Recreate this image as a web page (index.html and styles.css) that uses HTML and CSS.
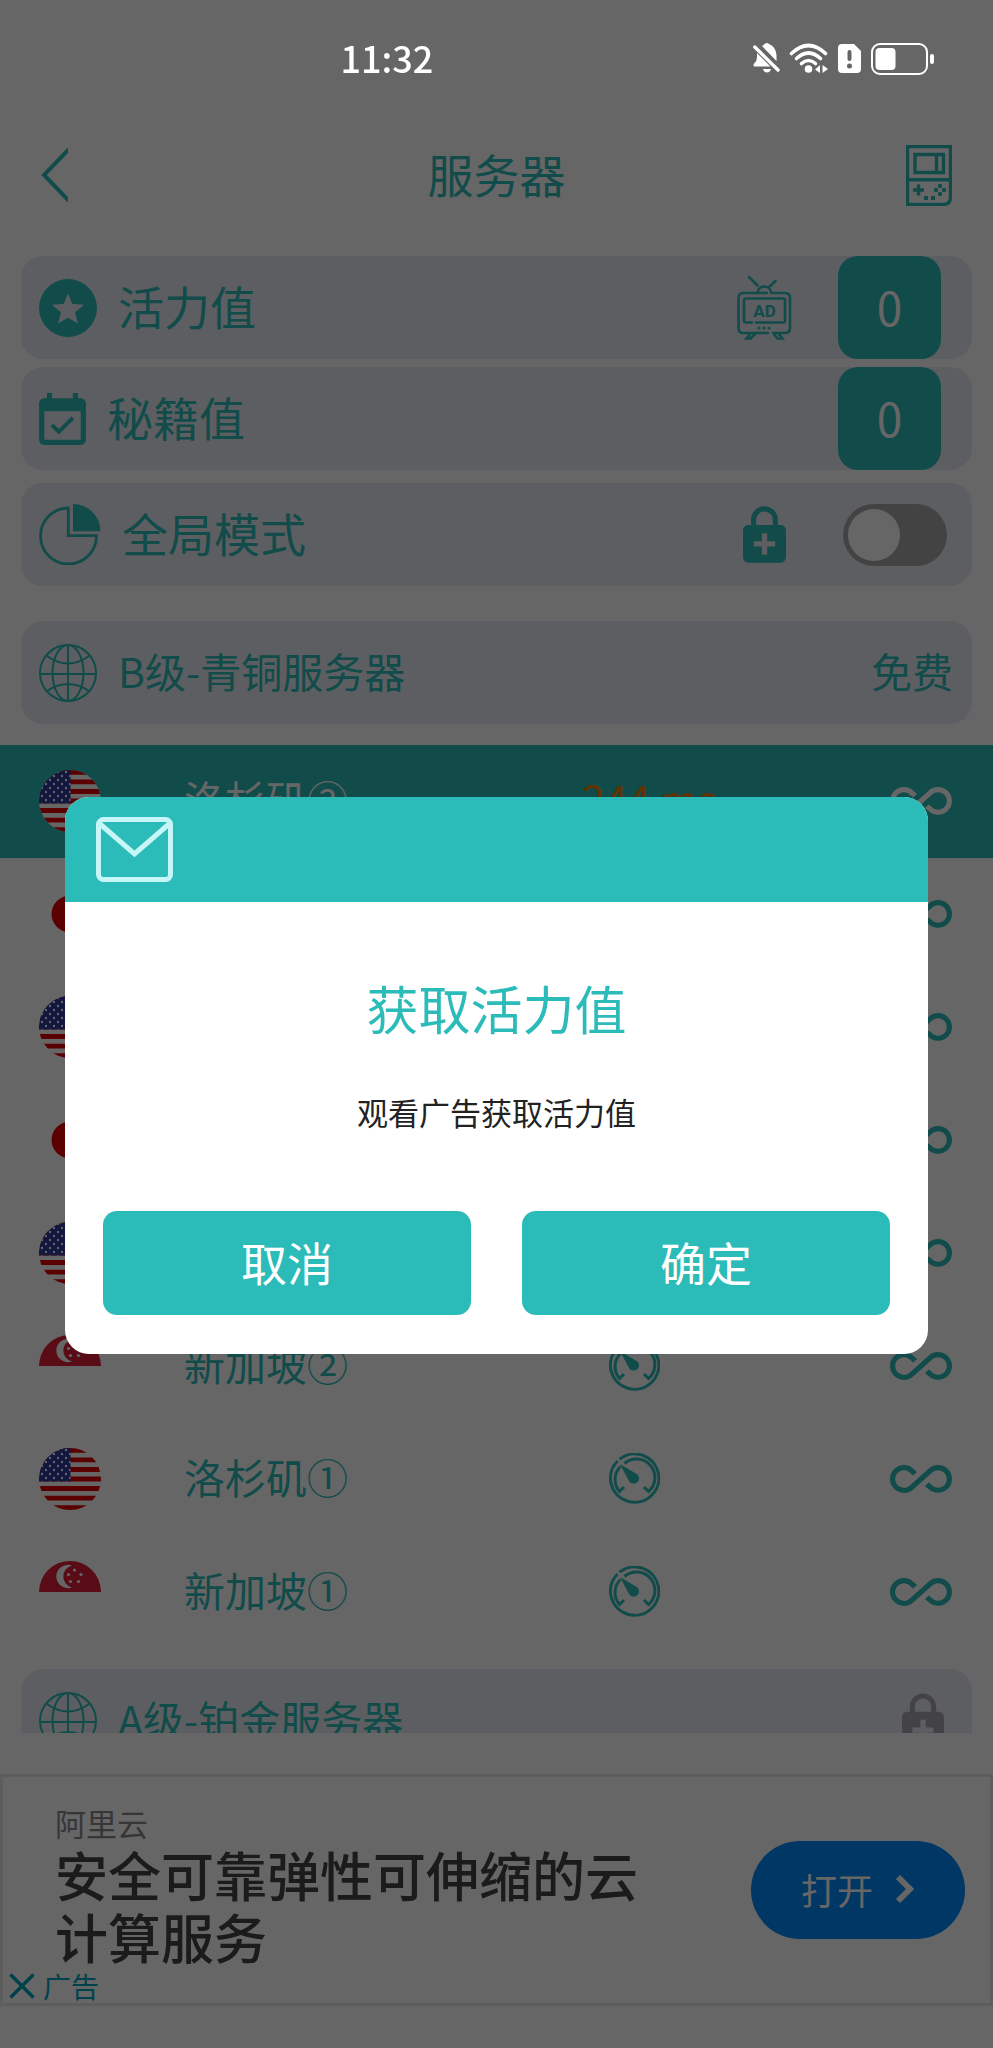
FILE: index.html
```html
<!DOCTYPE html>
<html lang="zh-CN">
<head>
<meta charset="utf-8">
<meta name="viewport" content="width=device-width, initial-scale=1">
<title>服务器</title>
<link rel="stylesheet" href="styles.css">
</head>
<body>
<svg class="sprite" aria-hidden="true">
  <defs>
    <clipPath id="disc"><circle cx="31" cy="31" r="31"/></clipPath>
    <pattern id="stars" width="8" height="8" patternUnits="userSpaceOnUse">
      <circle cx="3" cy="2" r="1.200" fill="#fff"/><circle cx="7" cy="6" r="1.200" fill="#fff"/>
    </pattern>
  </defs>
  <symbol id="flag-us" viewBox="0 0 62 62">
    <g clip-path="url(#disc)">
      <rect width="62" height="62" fill="#fff"/>
      <path d="M0 2.4H62M0 11.9H62M0 21.5H62M0 31H62M0 40.5H62M0 50.1H62M0 59.6H62" stroke="#e30000" stroke-width="4.8"/>
      <rect width="31.5" height="33.4" fill="#2b3a9b"/>
      <rect width="31.5" height="33.4" fill="url(#stars)"/>
    </g>
  </symbol>
  <symbol id="flag-jp" viewBox="0 0 62 62">
    <circle cx="31" cy="31" r="31" fill="#fff"/><circle cx="31" cy="31" r="18.5" fill="#e30000"/>
  </symbol>
  <symbol id="flag-sg" viewBox="0 0 62 62">
    <circle cx="31" cy="31" r="31" fill="#fff"/>
    <path d="M0 31A31 31 0 0 1 62 31Z" fill="#e02038"/>
    <path d="M33 4.500A11.700 11.700 0 1 0 33 26.500A11.300 11.300 0 0 1 33 4.500Z" fill="#fff"/>
    <g fill="#fff"><circle cx="35.500" cy="9" r="1.600"/><circle cx="29.500" cy="13.500" r="1.600"/><circle cx="42" cy="13.500" r="1.600"/><circle cx="31.500" cy="20.500" r="1.600"/><circle cx="39.500" cy="20.500" r="1.600"/></g>
  </symbol>
  <symbol id="gauge" viewBox="0 0 52 52">
    <g fill="none" stroke="currentColor" stroke-width="3">
      <path d="M9.500 8A24.200 24.200 0 1 0 11.500 6.200"/>
      <path d="M16 34L11.500 38.500A18.300 18.300 0 0 1 12.500 13.500M16.500 10.500A18.300 18.300 0 0 1 40.500 38.500L36 34"/>
    </g>
    <path d="M12 11L29.500 21.500A5.400 5.400 0 1 1 21 28Z" fill="currentColor"/>
  </symbol>
  <symbol id="infinity" viewBox="0 6.6 24 10.8">
    <path fill="currentColor" d="M18.6 6.62c-1.44 0-2.8.56-3.77 1.53L12 10.66 10.48 12h.01L7.8 14.39c-.64.64-1.49.99-2.4.99-1.87 0-3.39-1.51-3.39-3.38S3.53 8.620 5.400 8.620c.91 0 1.760.35 2.440 1.030l1.130 1 1.510-1.340L9.220 8.200C8.200 7.180 6.840 6.620 5.400 6.620 2.420 6.620 0 9.040 0 12s2.420 5.380 5.400 5.380c1.440 0 2.800-.56 3.770-1.530l2.830-2.500.01.01L13.520 12h-.01l2.690-2.390c.64-.64 1.490-.99 2.400-.99 1.870 0 3.390 1.510 3.390 3.380s-1.520 3.380-3.390 3.380c-.9 0-1.760-.35-2.440-1.030l-1.140-1.010-1.510 1.340 1.270 1.120c1.020 1.010 2.370 1.570 3.820 1.570 2.980 0 5.400-2.410 5.400-5.380s-2.420-5.370-5.400-5.370z"/>
  </symbol>
  <symbol id="lock" viewBox="4 1 16 21">
    <path fill="currentColor" d="M18 8h-1V6c0-2.760-2.240-5-5-5S7 3.240 7 6v2H6c-1.100 0-2 .9-2 2v10c0 1.100.9 2 2 2h12c1.100 0 2-.9 2-2V10c0-1.100-.9-2-2-2zM8.900 6c0-1.710 1.390-3.100 3.100-3.100s3.100 1.390 3.100 3.100v2H8.900V6zM16 16h-3v3h-2v-3H8v-2h3v-3h2v3h3v2z"/>
  </symbol>
  <symbol id="globe" viewBox="0 0 58 58">
    <g fill="none" stroke="currentColor" stroke-width="2">
      <circle cx="29" cy="29" r="28"/><ellipse cx="29" cy="29" rx="15.500" ry="28"/>
      <path d="M29 1V57M1 30H57M8 12Q29 27 50 12M8 47Q29 33 50 47"/>
    </g>
  </symbol>
</svg>

<div class="screen">
  <div class="status">
    <span class="status-time">11:32</span>
    <div class="status-icons">
      <svg width="27" height="32" viewBox="0 0 27 32" fill="#fff">
        <path d="M9 3Q11 2 11.500 1Q14-1 16 1Q23 4 23.500 12V18Z"/>
        <path d="M4 10L17.500 23.500H1.500Q-.5 22.500 1.500 20Q4 18 4 14Z"/>
        <path d="M10 26H18Q17 29.500 14 29.500Q11 29.500 10 26Z"/>
        <path d="M1.800 4L25 27" stroke="#fff" stroke-width="3.400" stroke-linecap="round"/>
      </svg>
      <svg width="40" height="32" viewBox="0 0 40 32">
        <g fill="none" stroke="#fff" stroke-width="3.600" stroke-linecap="round">
          <path d="M2.500 10.500Q19.500-5.500 36.500 10.500"/><path d="M7.500 15.500Q19.500 4.500 31.500 15.500"/><path d="M12.500 20.500Q19.500 14.500 26.500 20.500"/>
        </g>
        <circle cx="19.500" cy="26" r="3.800" fill="#fff"/>
        <path d="M31 22V30L26 26.500ZM33.500 22V30L39 26Z" fill="#fff"/>
      </svg>
      <svg width="24" height="32" viewBox="0 0 24 32">
        <path fill="#fff" fill-rule="evenodd" d="M4 1H16L23 8V26Q23 30 19 30H4Q0 30 0 26V5Q0 1 4 1ZM11.500 7Q9.500 7 9.500 9V16Q9.500 18 11.500 18T13.500 16V9Q13.500 7 11.500 7ZM11.500 20.500A2.500 2.500 0 1 0 11.500 25.500A2.500 2.500 0 1 0 11.500 20.500Z"/>
      </svg>
      <svg width="64" height="34" viewBox="0 0 64 34">
        <rect x="1" y="2" width="55" height="30" rx="8" fill="none" stroke="#fff" stroke-width="2"/>
        <rect x="4.500" y="6" width="20" height="22" rx="4" fill="#fff"/>
        <rect x="59" y="12" width="4" height="10" rx="2" fill="#fff"/>
      </svg>
    </div>
  </div>

  <header class="topbar">
    <button class="icon-btn" type="button" aria-label="返回">
      <svg width="27" height="54" viewBox="0 0 27 54"><path d="M30-1L3 27L30 55" fill="none" stroke="currentColor" stroke-width="4"/></svg>
    </button>
    <h1 class="title">服务器</h1>
    <button class="icon-btn" type="button" aria-label="游戏">
      <svg width="46" height="61" viewBox="0 0 46 61">
        <g fill="none" stroke="currentColor" stroke-width="3.400">
          <path d="M1.500 1.500H44.500V52Q44.500 59.500 37 59.500H1.500ZM0 34.700H46"/>
          <path d="M9 9.500H37.500V27.500H9ZM30.500 9.500V27.500"/>
          <path d="M12.500 39.500V50.500M7 45H18"/>
        </g>
        <g fill="currentColor"><rect x="18" y="51" width="4" height="4"/><rect x="25" y="51" width="4" height="4"/><circle cx="34" cy="41" r="2.200"/><circle cx="34" cy="49" r="2.200"/><circle cx="30" cy="45" r="2.200"/><circle cx="38" cy="45" r="2.200"/></g>
      </svg>
    </button>
  </header>

  <section class="stats">
    <div class="card">
      <svg width="58" height="58" viewBox="0 0 58 58"><path fill="currentColor" fill-rule="evenodd" d="M29 0A29 29 0 1 0 29 58A29 29 0 1 0 29 0ZM29 14.500L33.300 25L45 25.800L36 33.500L39 44.500L29 38.700L19 44.500L22 33.500L13 25.800L24.700 25Z"/></svg>
      <span class="card-label">活力值</span>
      <button class="icon-btn" type="button" aria-label="观看广告">
        <svg width="55" height="66" viewBox="0 0 55 66">
          <g fill="none" stroke="currentColor" stroke-width="2.600" stroke-linecap="round">
            <path d="M30 18H6Q1.500 18 1.500 23V53Q1.500 58 6 58H31M36 58H48Q53 58 53 53V23Q53 18 48 18H34.500Q33 11.500 27.500 11.500T20.500 17"/>
            <path d="M15 47.500H9Q7 47.500 7 45.500V25.500Q7 23.500 9 23.500H46Q48 23.500 48 25.500V45.500Q48 47.500 46 47.500H19"/>
            <path d="M12 2L20.500 10.500M38.500 6L32.500 11.500M13 59L9.500 63.500H13.500L18 59M37 59L40.500 63.500H45.500L42 59"/>
          </g>
          <g fill="currentColor"><circle cx="22" cy="53" r="1.600"/><circle cx="27" cy="53" r="1.600"/><circle cx="32" cy="53" r="1.600"/></g>
          <text class="tv-text" x="27.500" y="41.500" text-anchor="middle">AD</text>
        </svg>
      </button>
      <button class="score" type="button">0</button>
    </div>
    <div class="card">
      <svg width="47" height="52" viewBox="3 1 18 20"><path fill="currentColor" d="M16.530 11.060L15.470 10l-4.880 4.880-2.120-2.120-1.060 1.060L10.590 17l5.940-5.940zM19 3h-1V1h-2v2H8V1H6v2H5c-1.110 0-1.990.9-1.990 2L3 19c0 1.100.89 2 2 2h14c1.100 0 2-.9 2-2V5c0-1.100-.9-2-2-2zm0 16H5V8h14v11z"/></svg>
      <span class="card-label">秘籍值</span>
      <button class="score" type="button">0</button>
    </div>
    <div class="card card-mode">
      <svg width="62" height="61" viewBox="0 0 62 61">
        <path d="M29.300 4A28 28 0 1 0 57.500 31.700H29.300Z" fill="none" stroke="currentColor" stroke-width="2.800"/>
        <path d="M34 0A27.500 27.500 0 0 1 61.500 27.300H34Z" fill="currentColor"/>
      </svg>
      <label class="card-label" for="global-mode">全局模式</label>
      <svg class="mode-lock" width="43" height="57"><use href="#lock"/></svg>
      <input class="switch" type="checkbox" id="global-mode">
    </div>
  </section>

  <main class="servers">
    <div class="card group">
      <svg width="58" height="58"><use href="#globe"/></svg>
      <h2 class="card-label">B级-青铜服务器</h2>
      <span class="price">免费</span>
    </div>
    <ul class="rows">
      <li class="row selected"><svg class="flag"><use href="#flag-us"/></svg><span class="name">洛杉矶②</span><span class="ping">244 ms</span><svg class="quota"><use href="#infinity"/></svg></li>
      <li class="row"><svg class="flag"><use href="#flag-jp"/></svg><span></span><button class="icon-btn" type="button" aria-label="测速"><svg class="gauge"><use href="#gauge"/></svg></button><svg class="quota"><use href="#infinity"/></svg></li>
      <li class="row"><svg class="flag"><use href="#flag-us"/></svg><span></span><button class="icon-btn" type="button" aria-label="测速"><svg class="gauge"><use href="#gauge"/></svg></button><svg class="quota"><use href="#infinity"/></svg></li>
      <li class="row"><svg class="flag"><use href="#flag-jp"/></svg><span></span><button class="icon-btn" type="button" aria-label="测速"><svg class="gauge"><use href="#gauge"/></svg></button><svg class="quota"><use href="#infinity"/></svg></li>
      <li class="row"><svg class="flag"><use href="#flag-us"/></svg><span></span><button class="icon-btn" type="button" aria-label="测速"><svg class="gauge"><use href="#gauge"/></svg></button><svg class="quota"><use href="#infinity"/></svg></li>
      <li class="row"><svg class="flag"><use href="#flag-sg"/></svg><span class="name">新加坡②</span><button class="icon-btn" type="button" aria-label="测速"><svg class="gauge"><use href="#gauge"/></svg></button><svg class="quota"><use href="#infinity"/></svg></li>
      <li class="row"><svg class="flag"><use href="#flag-us"/></svg><span class="name">洛杉矶①</span><button class="icon-btn" type="button" aria-label="测速"><svg class="gauge"><use href="#gauge"/></svg></button><svg class="quota"><use href="#infinity"/></svg></li>
      <li class="row"><svg class="flag"><use href="#flag-sg"/></svg><span class="name">新加坡①</span><button class="icon-btn" type="button" aria-label="测速"><svg class="gauge"><use href="#gauge"/></svg></button><svg class="quota"><use href="#infinity"/></svg></li>
    </ul>
    <div class="card group">
      <svg width="58" height="58"><use href="#globe"/></svg>
      <h2 class="card-label">A级-铂金服务器</h2>
      <svg class="group-lock" width="42" height="56"><use href="#lock"/></svg>
    </div>
  </main>

  <aside class="ad">
    <div class="ad-copy">
      <p class="ad-brand">阿里云</p>
      <p class="ad-title">安全可靠弹性可伸缩的云计算服务</p>
    </div>
    <button class="ad-open" type="button">打开
      <svg width="20" height="30" viewBox="0 0 20 30"><path d="M3 3L15 15L3 27" fill="none" stroke="currentColor" stroke-width="6"/></svg>
    </button>
    <button class="ad-close" type="button">
      <svg width="26" height="26" viewBox="0 0 26 26"><path d="M1.500 1.500L24.500 24.500M24.500 1.500L1.500 24.500" stroke="currentColor" stroke-width="3.500"/></svg>广告
    </button>
  </aside>
</div>

<div class="overlay">
  <div class="dialog" role="dialog" aria-modal="true" aria-labelledby="dialog-title">
    <div class="dialog-head">
      <svg width="77" height="65" viewBox="0 0 77 65"><g fill="none" stroke="#c6f6f7" stroke-width="5" stroke-linejoin="round"><rect x="2.500" y="2.500" width="72" height="60" rx="5"/><path d="M4 7L38.500 37L73 7" stroke-linejoin="miter"/></g></svg>
    </div>
    <div class="dialog-body">
      <h2 class="dialog-title" id="dialog-title">获取活力值</h2>
      <p class="dialog-text">观看广告获取活力值</p>
      <div class="dialog-actions">
        <button class="dialog-btn" type="button">取消</button>
        <button class="dialog-btn" type="button">确定</button>
      </div>
    </div>
  </div>
</div>
</body>
</html>
```
FILE: styles.css
```css
:root {
  --teal: #2bbbb9;
  --card: #e8ebf2;
}

* { box-sizing: border-box; }

body {
  margin: 0;
  background: #fff;
  color: var(--teal);
  font-family: "Noto Sans CJK SC", sans-serif;
}

h1, h2, p, ul { margin: 0; padding: 0; font-weight: 400; }
ul { list-style: none; }
svg { display: block; flex: none; }
button { font: inherit; color: inherit; border: 0; padding: 0; cursor: pointer; }

.sprite { position: absolute; width: 0; height: 0; }

.icon-btn { background: none; }

.screen {
  display: flex;
  flex-direction: column;
  height: 100vh;
  padding-bottom: 42px;
}

.status {
  position: relative;
  z-index: 2;
  display: flex;
  flex: none;
  align-items: center;
  justify-content: space-between;
  height: 118px;
  padding: 0 58px 0 calc(50% - 156px);
  color: #fff;
}
.status-time { padding-bottom: 5px; font-size: 36px; font-weight: 500; line-height: 40px; }
.status-icons { display: flex; align-items: center; gap: 9px; }

.topbar {
  display: flex;
  flex: none;
  align-items: center;
  justify-content: space-between;
  height: 114px;
  padding: 0 41px;
}
.title { padding: 0 0 4px 19px; font-size: 46px; line-height: 60px; }

.stats {
  display: flex;
  flex: none;
  flex-direction: column;
  gap: 8px;
  padding: 24px 21px 35px;
}

.card {
  display: flex;
  align-items: center;
  gap: 21px;
  height: 103px;
  padding: 0 31px 0 18px;
  border-radius: 22px;
  background: var(--card);
}
.card-label { flex: 1; padding-bottom: 5px; font-size: 46px; line-height: 60px; }
.card-mode { margin-top: 5px; padding-right: 25px; }
.mode-lock { margin-right: 36px; }

.tv-text { fill: currentColor; font-family: Roboto, sans-serif; font-size: 17px; font-weight: 700; }

.score {
  width: 103px;
  height: 103px;
  margin-left: 25px;
  padding-bottom: 4px;
  border-radius: 20px;
  background: var(--teal);
  color: #fff;
  font-size: 46px;
  line-height: 60px;
}

.switch {
  appearance: none;
  display: flex;
  align-items: center;
  width: 104px;
  height: 62px;
  margin: 0;
  padding: 5px;
  border-radius: 31px;
  background: #a8a8a8;
}
.switch::before {
  content: "";
  width: 52px;
  height: 52px;
  border-radius: 50%;
  background: #fff;
}

.servers { flex: 1; min-height: 0; overflow: hidden; }
.group { margin: 0 21px; padding-right: 19px; }
.group .card-label, .price, .row { font-size: 41px; line-height: 56px; }
.price { padding-bottom: 5px; }
.group-lock { margin-right: 9px; color: #a9a9b0; }

.rows { padding: 21px 0 20px; }
.row {
  display: grid;
  grid-template-columns: 145px 370fr 160px 238fr;
  align-items: center;
  height: 113px;
  padding: 0 41px 2px 39px;
}
.selected { background: var(--teal); color: #fff; }
.flag { width: 62px; height: 62px; }
.name, .ping { padding-bottom: 5px; }
.ping { padding-left: 28px; color: #f08000; white-space: nowrap; }
.gauge { width: 52px; height: 52px; margin: 0 auto; }
.quota { width: 62px; height: 28px; justify-self: end; }

.ad {
  position: relative;
  display: flex;
  flex: none;
  align-items: center;
  justify-content: space-between;
  margin-top: 41px;
  padding: 26px 25px 36px 52px;
  border: 3px solid #e8e8e8;
}
.ad-copy { width: 66%; }
.ad-brand { color: #888; font-size: 31px; line-height: 40px; }
.ad-title { color: #444; font-size: 53px; font-weight: 500; line-height: 62px; }
.ad-open {
  display: flex;
  align-items: center;
  justify-content: center;
  gap: 22px;
  width: 214px;
  height: 98px;
  margin-top: 10px;
  padding-bottom: 2px;
  border-radius: 49px;
  background: #0089fa;
  color: #fff;
  font-size: 36px;
  line-height: 48px;
}
.ad-close {
  position: absolute;
  left: 6px;
  bottom: 1px;
  display: flex;
  align-items: center;
  gap: 8px;
  background: none;
  color: #00a5bb;
  font-size: 28px;
  line-height: 32px;
}

.overlay {
  position: fixed;
  inset: 0;
  z-index: 1;
  display: flex;
  align-items: center;
  padding: 103px 65px 0;
  background: rgba(0, 0, 0, 0.6);
}
.dialog {
  flex: 1;
  overflow: hidden;
  border-radius: 24px;
  background: #fff;
}
.dialog-head { padding: 20px 31px; background: var(--teal); }
.dialog-body { padding: 72px 38px 39px; text-align: center; }
.dialog-title { font-size: 52px; line-height: 68px; }
.dialog-text { margin-top: 50px; color: #222; font-size: 31px; line-height: 40px; }
.dialog-actions { display: flex; gap: 51px; margin-top: 79px; }
.dialog-btn {
  flex: 1;
  height: 104px;
  padding-bottom: 4px;
  border-radius: 14px;
  background: var(--teal);
  color: #fff;
  font-size: 46px;
  line-height: 60px;
}
```
